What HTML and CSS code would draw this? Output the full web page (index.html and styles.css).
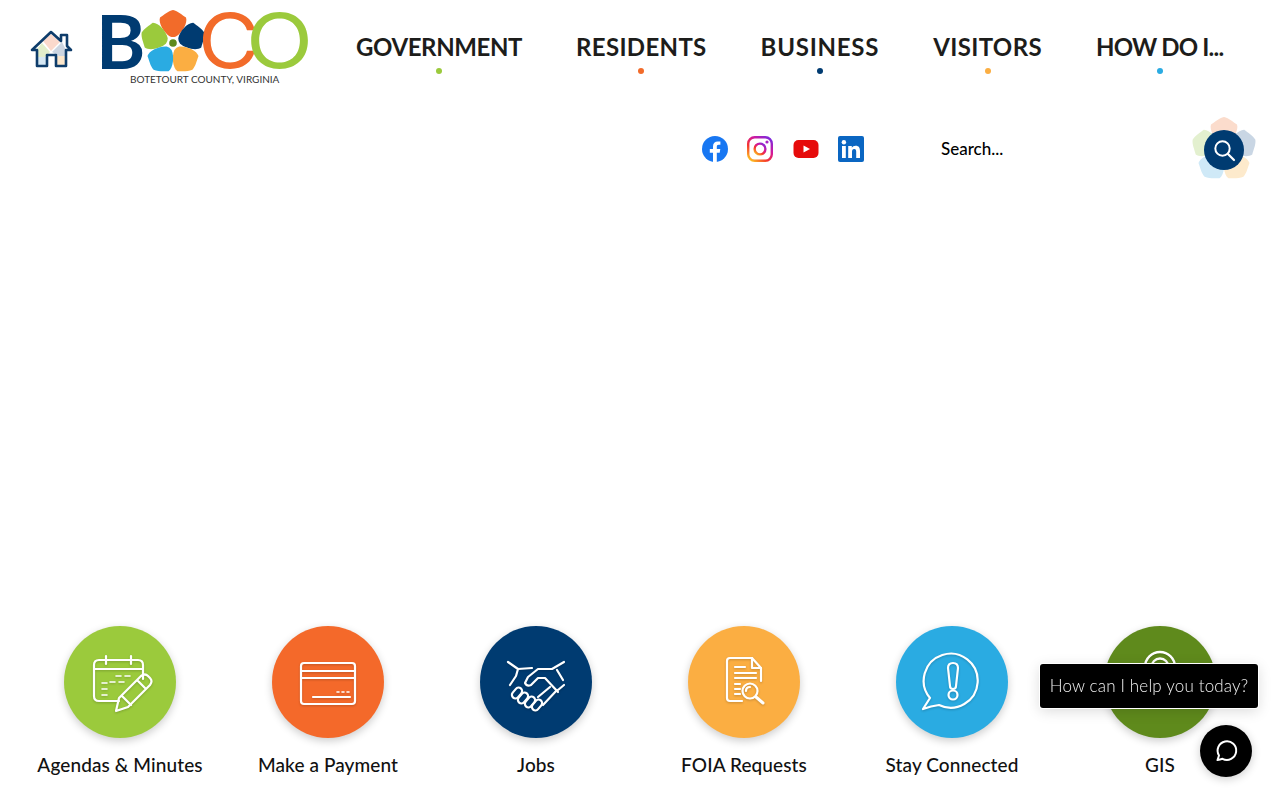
FILE: index.html
```html
<!DOCTYPE html>
<html lang="en">
<head>
    <meta charset="UTF-8">
    <meta name="viewport" content="width=device-width, initial-scale=1.0">
    <title>Botetourt County, Virginia</title>
    <link rel="stylesheet" href="styles.css">
</head>
<body>
<header class="site-header">
    <a class="home-link" href="#" aria-label="Home">
        <svg width="44" height="40" viewBox="0 0 44 40">
            <path d="M22 5 L31 13 L22 22 L14 12 Z" fill="#fbd9cc"/>
            <path d="M7 21 L13 14 L21 23 L15 29 H8 Z" fill="#e2eecb"/>
            <path d="M37 21 L33 13 L23 23 L30 27 H37 Z" fill="#ccd5e1"/>
            <path d="M8 28 H17 V36 H8 Z" fill="#d6e8f4"/>
            <path d="M27 27 H36 V36 H27 Z" fill="#fde7cb"/>
            <path d="M22 3 L32 12 V6 H38 V17 L42 21 H37 V37 H27 V26 H18 V37 H8 V21 H3 Z" fill="none" stroke="#0f3d6b" stroke-width="2.6" stroke-linejoin="round"/>
        </svg>
    </a>
    <a class="logo" href="#" aria-label="Botetourt County, Virginia">
        <svg class="logo-mark" width="212" height="80" viewBox="0 0 212 80">
            <defs>
                <path id="petal" d="M0 -33 C5 -32 9 -28 13 -25.5 C15 -20 9 -10 3 -6.5 Q0 -5.5 -3 -6.5 C-9 -10 -15 -20 -13 -25.5 C-9 -28 -5 -32 0 -33 Z"/>
            </defs>
            <text class="logo-b" x="-4" y="61">B</text>
            <g transform="translate(73 35)">
                <use href="#petal" fill="#f26b2a"/>
                <use href="#petal" fill="#9bca3c" transform="rotate(-72)"/>
                <use href="#petal" fill="#003b71" transform="rotate(72)"/>
                <use href="#petal" fill="#fbae42" transform="rotate(144)"/>
                <use href="#petal" fill="#2aabe2" transform="rotate(-144)"/>
                <circle r="3.8" fill="#5f8a1c"/>
            </g>
            <text class="logo-c" transform="translate(98 60) scale(1.12 1)">C</text>
            <text class="logo-o" transform="translate(146 60) scale(1.17 1)">O</text>
            <text class="logo-sub" x="30" y="75">BOTETOURT COUNTY, VIRGINIA</text>
        </svg>
    </a>
    <nav class="main-nav">
        <a href="#" class="nav-item dot-green">GOVERNMENT</a>
        <a href="#" class="nav-item dot-orange">RESIDENTS</a>
        <a href="#" class="nav-item dot-navy">BUSINESS</a>
        <a href="#" class="nav-item dot-yellow">VISITORS</a>
        <a href="#" class="nav-item dot-blue">HOW DO I...</a>
    </nav>
</header>

<div class="utility-bar">
    <div class="social-links">
        <a href="#" aria-label="Facebook">
            <svg width="26" height="26" viewBox="0 0 26 26">
                <circle cx="13" cy="13" r="13" fill="#1877f2"/>
                <path d="M11 26 V16.7 H7.8 V13 H11 V10.4 C11 7.2 12.9 5.4 15.8 5.4 C17.2 5.4 18.4 5.6 18.4 5.6 V8.8 H16.8 C15.2 8.8 14.8 9.7 14.8 10.7 V13 H18.3 L17.7 16.7 H14.8 V26 Z" fill="#fff"/>
            </svg>
        </a>
        <a href="#" aria-label="Instagram">
            <svg width="26" height="26" viewBox="0 0 26 26">
                <defs>
                    <linearGradient id="ig" x1="0.1" y1="1" x2="0.9" y2="0">
                        <stop offset="0" stop-color="#fdc323"/>
                        <stop offset="0.35" stop-color="#f5352f"/>
                        <stop offset="0.65" stop-color="#d3189a"/>
                        <stop offset="1" stop-color="#7a2be0"/>
                    </linearGradient>
                </defs>
                <rect x="1.2" y="1.2" width="23.6" height="23.6" rx="6.5" fill="none" stroke="url(#ig)" stroke-width="2.4"/>
                <circle cx="13" cy="13" r="5.4" fill="none" stroke="url(#ig)" stroke-width="2.4"/>
                <circle cx="20" cy="6" r="1.6" fill="#a824c4"/>
            </svg>
        </a>
        <a href="#" aria-label="YouTube">
            <svg width="26" height="26" viewBox="0 0 26 26">
                <rect x="0.5" y="4" width="25" height="18" rx="5" fill="#e60b0b"/>
                <path d="M10.5 9.5 L17 13 L10.5 16.5 Z" fill="#fff"/>
            </svg>
        </a>
        <a href="#" aria-label="LinkedIn">
            <svg width="26" height="26" viewBox="0 0 26 26">
                <rect width="26" height="26" rx="2" fill="#0a66c2"/>
                <rect x="4" y="10" width="3.8" height="12" fill="#fff"/>
                <circle cx="5.9" cy="6.2" r="2.2" fill="#fff"/>
                <path d="M10.2 10 H13.8 V11.7 C14.5 10.5 15.9 9.7 17.6 9.7 C21 9.7 22 11.9 22 15 V22 H18.2 V15.8 C18.2 14.3 17.8 13 16.2 13 C14.6 13 14 14.2 14 15.8 V22 H10.2 Z" fill="#fff"/>
            </svg>
        </a>
    </div>
    <form class="search-form" onsubmit="return false">
        <input type="text" class="search-input" placeholder="Search...">
        <button class="search-button" aria-label="Search">
            <svg width="66" height="66" viewBox="-33 -33 66 66">
                <use href="#petal" fill="#fbdccc"/>
                <use href="#petal" fill="#e3f0cf" transform="rotate(-72)"/>
                <use href="#petal" fill="#c9d6e4" transform="rotate(72)"/>
                <use href="#petal" fill="#fdeacc" transform="rotate(144)"/>
                <use href="#petal" fill="#cfe9f7" transform="rotate(-144)"/>
                <circle r="20" fill="#003b71"/>
                <circle cx="-1.5" cy="-1.5" r="7.2" fill="none" stroke="#fff" stroke-width="2"/>
                <path d="M4 4 L10 10" stroke="#fff" stroke-width="2.2" stroke-linecap="round"/>
            </svg>
        </button>
    </form>
</div>

<main class="hero"></main>

<section class="quick-links">
    <a href="#" class="quick-link">
        <span class="quick-circle bg-green">
            <svg class="quick-icon" width="112" height="112" viewBox="0 0 112 112">
                <path d="M55 75 H35 Q30 75 30 70 V39 Q30 34 35 34 H74 Q79 34 79 39 V53"/>
                <path d="M30 43 H79 M42 30 V38 M67 30 V38"/>
                <path d="M52 50 H57 M61 50 H66 M46 56 H51 M55 56 H60 M38 57 H43 M38 63 H43 M38 69 H43" stroke-width="1.6"/>
                <path d="M52 85 L55 72 L77 50 Q81 47 84 50 L86 52 Q89 55 86 59 L64 81 Z M58 70 L67 79 M73 54 L82 63"/>
            </svg>
        </span>
        <span class="quick-label">Agendas &amp; Minutes</span>
    </a>
    <a href="#" class="quick-link">
        <span class="quick-circle bg-orange">
            <svg class="quick-icon" width="112" height="112" viewBox="0 0 112 112">
                <rect x="29" y="37" width="54" height="41" rx="3"/>
                <path d="M29 45 H83 M29 52 H83 M41 71 H78"/>
                <path d="M65 66 H67 M70 66 H72 M75 66 H77" stroke-width="1.6"/>
            </svg>
        </span>
        <span class="quick-label">Make a Payment</span>
    </a>
    <a href="#" class="quick-link">
        <span class="quick-circle bg-navy">
            <svg class="quick-icon" width="112" height="112" viewBox="0 0 112 112">
                <path d="M28 36 L38 43 L52 42 M84 36 L72 43 H58 L48 51 L45 57 Q47 61 51 59 L58 52 H65 L78 66 M38 43 L36 50 L30 59 M77 44 L83 54 M84 59 L78 64"/>
                <path d="M70 61 L58 71 M77 64 L63 79"/>
                <rect x="31" y="63.5" width="12" height="7" rx="3.5" transform="rotate(-50 37 67)"/>
                <rect x="37" y="68.5" width="12" height="7" rx="3.5" transform="rotate(-50 43 72)"/>
                <rect x="44" y="72.5" width="12" height="7" rx="3.5" transform="rotate(-50 50 76)"/>
                <rect x="51" y="75.5" width="12" height="7" rx="3.5" transform="rotate(-50 57 79)"/>
            </svg>
        </span>
        <span class="quick-label">Jobs</span>
    </a>
    <a href="#" class="quick-link">
        <span class="quick-circle bg-yellow">
            <svg class="quick-icon" width="112" height="112" viewBox="0 0 112 112">
                <path d="M54 75 H42 Q39 75 39 72 V35 Q39 32 42 32 H64 L73 42 V55"/>
                <path d="M64 32 V42 H73"/>
                <path d="M47 41 H57 M47 47 H68 M47 52 H68 M47 58 H52 M47 63 H52 M47 68 H52"/>
                <circle cx="62" cy="65" r="7.5"/>
                <path d="M58 65 Q58 61 62 61"/>
                <path d="M68 71 L75 77" stroke-width="3"/>
            </svg>
        </span>
        <span class="quick-label">FOIA Requests</span>
    </a>
    <a href="#" class="quick-link">
        <span class="quick-circle bg-blue">
            <svg class="quick-icon" width="112" height="112" viewBox="0 0 112 112">
                <path d="M27 83 L34 72 A27 27 0 1 1 43 79 Q35 80 27 83 Z"/>
                <path d="M52 42 Q52 37 57 37 Q62 37 62 42 L60 60 Q60 63 57 63 Q54 63 54 60 Z"/>
                <circle cx="57" cy="69" r="4.5"/>
            </svg>
        </span>
        <span class="quick-label">Stay Connected</span>
    </a>
    <a href="#" class="quick-link">
        <span class="quick-circle bg-olive">
            <svg class="quick-icon" width="112" height="112" viewBox="0 0 112 112">
                <circle cx="56" cy="41" r="15" stroke-width="2.4"/>
                <circle cx="56" cy="41" r="8.5" stroke-width="2.4"/>
            </svg>
        </span>
        <span class="quick-label">GIS</span>
    </a>
</section>

<div class="chat-tip">How can I help you today?</div>
<button class="chat-button" aria-label="Open chat">
    <svg width="24" height="24" viewBox="0 0 24 24">
        <path d="M3.5 21 L5 16.5 A9.3 9.3 0 1 1 8.5 19.8 Q6 20.6 3.5 21 Z" fill="none" stroke="#fff" stroke-width="2" stroke-linejoin="round"/>
    </svg>
</button>
</body>
</html>
```

FILE: styles.css
```css
body {
    font-family: "Lato", "Open Sans", sans-serif;
    background-color: #fff;
    color: #1d1d1b;
    margin: 0;
    padding: 0;
    height: 800px;
    overflow: hidden;
}
a {
    color: inherit;
    text-decoration: none;
}
svg {
    display: block;
}

/* top row */
.site-header {
    display: flex;
    align-items: flex-start;
    height: 100px;
}
.home-link {
    margin: 29px 0 0 29px;
}
.logo {
    margin: 8px 0 0 27px;
}
.logo-mark {
    overflow: visible;
}
.logo-b {
    font: 700 75px "Lato", sans-serif;
    fill: #003b71;
}
.logo-c {
    font: 400 75px "Inter", sans-serif;
    fill: #f26b2a;
}
.logo-o {
    font: 400 75px "Inter", sans-serif;
    fill: #9bca3c;
}
.logo-sub {
    font: 400 10px "Lato", sans-serif;
    fill: #333;
}
.main-nav {
    display: flex;
    gap: 54px;
    margin-left: 44px;
    padding-top: 32px;
}
.nav-item {
    display: flex;
    flex-direction: column;
    align-items: center;
    font-size: 24px;
    font-weight: 700;
    line-height: 30px;
    white-space: nowrap;
}
.nav-item::after {
    content: "";
    width: 6px;
    height: 6px;
    margin-top: 6px;
    border-radius: 50%;
}
.dot-green { letter-spacing: -0.4px; }
.dot-orange { letter-spacing: 0.33px; }
.dot-navy { letter-spacing: 0.75px; }
.dot-yellow { letter-spacing: 0.37px; }
.dot-blue { letter-spacing: -0.8px; }
.dot-green::after { background-color: #9bca3c; }
.dot-orange::after { background-color: #f26b2a; }
.dot-navy::after { background-color: #003b71; }
.dot-yellow::after { background-color: #fbae42; }
.dot-blue::after { background-color: #2aabe2; }

/* social icons and search */
.utility-bar {
    display: flex;
    justify-content: flex-end;
    align-items: center;
    height: 98px;
    padding-right: 23px;
}
.social-links {
    display: flex;
    gap: 19.3px;
    margin-right: 67px;
}
.search-form {
    display: flex;
    align-items: center;
}
.search-input {
    width: 250px;
    padding: 0 0 2px 10px;
    border: none;
    outline: none;
    font: 500 17px "Lato", sans-serif;
    color: #000;
}
.search-input::placeholder {
    color: #000;
    opacity: 1;
}
.search-button {
    margin-top: 2px;
    padding: 0;
    border: none;
    background: none;
    cursor: pointer;
}

.hero {
    height: 428px;
}

/* quick links */
.quick-links {
    display: grid;
    grid-template-columns: repeat(6, 1fr);
    padding: 0 16px;
}
.quick-link {
    display: flex;
    flex-direction: column;
    align-items: center;
    gap: 15px;
}
.quick-circle {
    width: 112px;
    height: 112px;
    border-radius: 50%;
    box-shadow: 0 3px 8px rgba(0, 0, 0, 0.2);
}
.quick-icon {
    fill: none;
    stroke: #fff;
    stroke-width: 2.2;
    stroke-linecap: round;
    stroke-linejoin: round;
    filter: drop-shadow(0 1px 1px rgba(0, 0, 0, 0.2));
}
.quick-label {
    font-size: 19px;
    font-weight: 500;
    line-height: 24px;
    letter-spacing: 0.1px;
    color: #111;
}
.bg-green { background-color: #9bca3c; }
.bg-orange { background-color: #f4692a; }
.bg-navy { background-color: #003b71; }
.bg-yellow { background-color: #fbae42; }
.bg-blue { background-color: #2aabe2; }
.bg-olive { background-color: #5f8a1c; }

/* chat widget */
.chat-tip {
    position: fixed;
    left: 1040px;
    top: 664px;
    width: 218px;
    height: 44px;
    box-sizing: border-box;
    display: flex;
    align-items: center;
    justify-content: center;
    padding-bottom: 2px;
    border-radius: 3px;
    background-color: #000;
    box-shadow: 0 0 0 1px #fff, 0 3px 14px rgba(0, 0, 0, 0.15);
    color: #f0f0f0;
    font-size: 17px;
    font-weight: 300;
    letter-spacing: 0.17px;
    white-space: nowrap;
}
.chat-button {
    position: fixed;
    left: 1200px;
    top: 725px;
    width: 52px;
    height: 52px;
    display: flex;
    align-items: center;
    justify-content: center;
    padding: 0;
    border: none;
    border-radius: 50%;
    background-color: #000;
    box-shadow: 0 2px 10px rgba(0, 0, 0, 0.2);
    cursor: pointer;
}
```
